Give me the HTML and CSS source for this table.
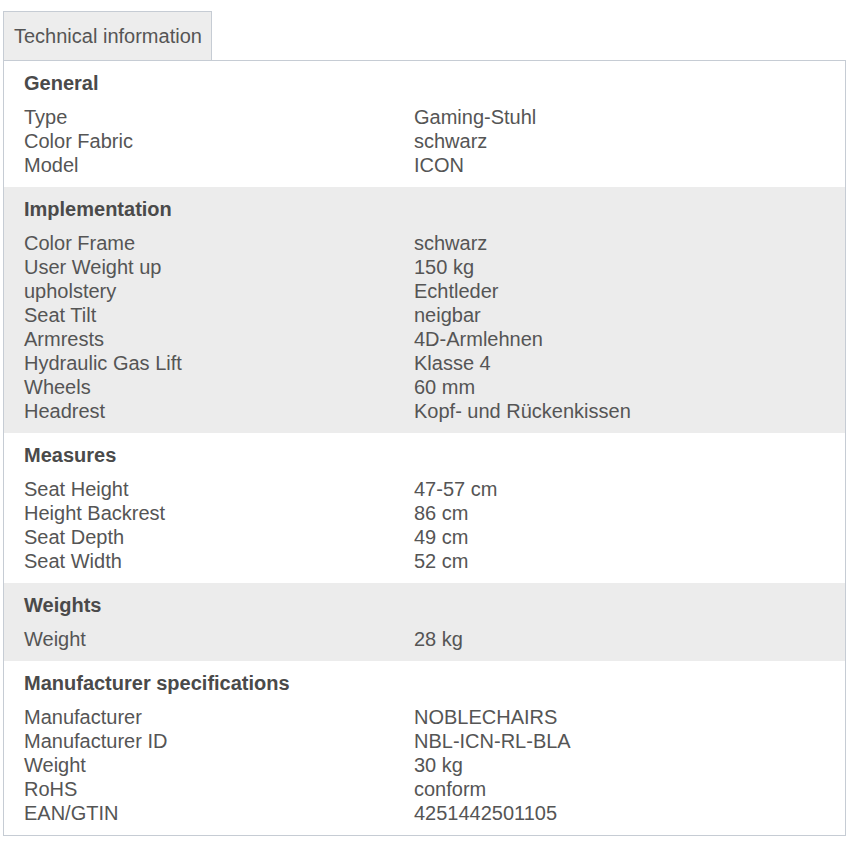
FILE: index.html
```html
<!DOCTYPE html>
<html lang="en">
<head>
<meta charset="utf-8">
<title>Technical information</title>
<link rel="stylesheet" href="styles.css">
</head>
<body>
<div class="wrap">
  <div class="tabs">
    <div class="tab">Technical information</div>
  </div>
  <div class="panel">
    <section class="group">
      <h3 class="group-title">General</h3>
      <dl class="rows">
        <dt>Type</dt><dd>Gaming-Stuhl</dd>
        <dt>Color Fabric</dt><dd>schwarz</dd>
        <dt>Model</dt><dd>ICON</dd>
      </dl>
    </section>
    <section class="group alt">
      <h3 class="group-title">Implementation</h3>
      <dl class="rows">
        <dt>Color Frame</dt><dd>schwarz</dd>
        <dt>User Weight up</dt><dd>150 kg</dd>
        <dt>upholstery</dt><dd>Echtleder</dd>
        <dt>Seat Tilt</dt><dd>neigbar</dd>
        <dt>Armrests</dt><dd>4D-Armlehnen</dd>
        <dt>Hydraulic Gas Lift</dt><dd>Klasse 4</dd>
        <dt>Wheels</dt><dd>60 mm</dd>
        <dt>Headrest</dt><dd>Kopf- und Rückenkissen</dd>
      </dl>
    </section>
    <section class="group">
      <h3 class="group-title">Measures</h3>
      <dl class="rows">
        <dt>Seat Height</dt><dd>47-57 cm</dd>
        <dt>Height Backrest</dt><dd>86 cm</dd>
        <dt>Seat Depth</dt><dd>49 cm</dd>
        <dt>Seat Width</dt><dd>52 cm</dd>
      </dl>
    </section>
    <section class="group alt">
      <h3 class="group-title">Weights</h3>
      <dl class="rows">
        <dt>Weight</dt><dd>28 kg</dd>
      </dl>
    </section>
    <section class="group">
      <h3 class="group-title">Manufacturer specifications</h3>
      <dl class="rows">
        <dt>Manufacturer</dt><dd>NOBLECHAIRS</dd>
        <dt>Manufacturer ID</dt><dd>NBL-ICN-RL-BLA</dd>
        <dt>Weight</dt><dd>30 kg</dd>
        <dt>RoHS</dt><dd>conform</dd>
        <dt>EAN/GTIN</dt><dd>4251442501105</dd>
      </dl>
    </section>
  </div>
</div>
</body>
</html>
```
FILE: styles.css
```css
* { box-sizing: border-box; }
html, body { margin: 0; padding: 0; background: #fff; }
body {
  font-family: "Liberation Sans", Arial, sans-serif;
  font-size: 20px;
  color: #555;
}
.wrap {
  padding: 11px 6px 0 3px;
}
.tabs {
  display: flex;
}
.tab {
  width: 209px;
  height: 49px;
  padding: 0 0 0 10px;
  line-height: 48px;
  background: #ededed;
  border: 1px solid #c6ccd4;
  border-bottom: none;
  color: #555;
}
.panel {
  border: 1px solid #c6ccd4;
}
.group {
  padding: 10px 20px 10px 20px;
  background: #fff;
}
.group.alt { background: #ececec; }
.group-title {
  margin: 0 0 10px;
  font-size: 20px;
  font-weight: bold;
  line-height: 24px;
  color: #4a4a4a;
}
.rows {
  display: grid;
  grid-template-columns: 390px 1fr;
  margin: 0;
  line-height: 24px;
}
.rows dt, .rows dd { margin: 0; }
```
